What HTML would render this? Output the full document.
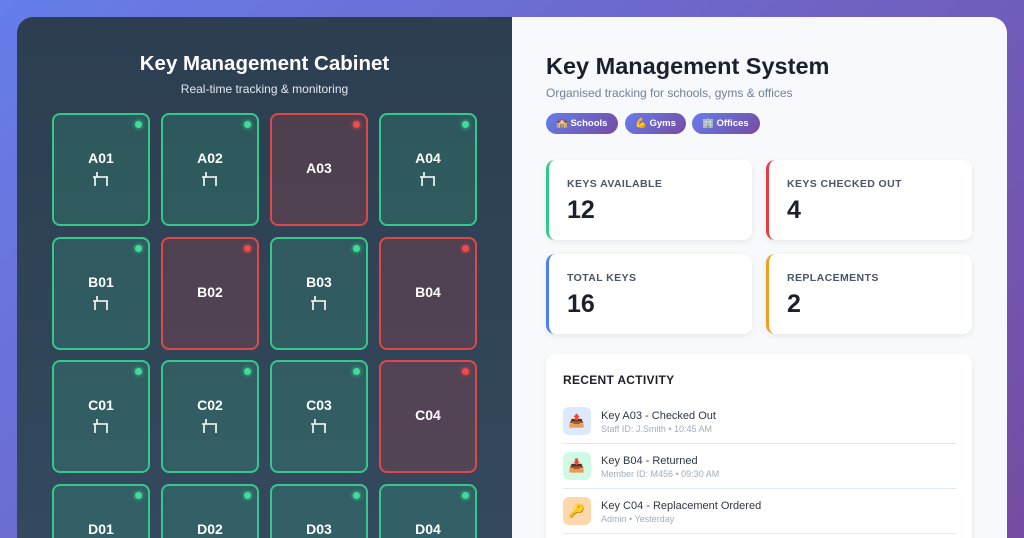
<!DOCTYPE html>
<html><head><meta charset="utf-8"><style>
*{box-sizing:border-box;margin:0;padding:0}
html{width:1024px;height:538px;overflow:hidden}
body{width:1024px;height:538px;overflow:hidden;background:linear-gradient(135deg,#667eea,#764ba2);font-family:"Liberation Sans","Noto Sans CJK SC",sans-serif;position:relative}
.wrap{position:absolute;left:17px;top:17px;width:990px;height:521px;border-radius:16px 16px 0 0;overflow:hidden;display:flex}
.left{width:495px;background:linear-gradient(180deg,#2c3e50,#34495e);position:relative}
.left h1{position:absolute;top:35px;width:100%;text-align:center;color:#fff;font-size:20.5px;font-weight:bold}
.left p{position:absolute;top:65px;width:100%;text-align:center;color:#e2e8f0;font-size:12px}
#g{position:absolute;left:0;top:0;width:1024px;height:538px;overflow:hidden}
.cell{position:absolute;width:98px;height:113px;border-radius:8px;border:2px solid #34c88a;background:rgba(52,200,138,.18);color:#fff;text-align:center}
.cell.r{border-color:#e04848;background:rgba(229,62,62,.18)}
.cell .d{position:absolute;right:6px;top:6px;width:7px;height:7px;border-radius:50%;background:#3ddc97;box-shadow:0 0 4px #3ddc97}
.cell.r .d{background:#f04a4a;box-shadow:0 0 4px #f04a4a}
.cell b{display:block;font-size:14px;margin-top:35px}
.cell.r b{margin-top:45px}
.cell svg{display:block;margin:5px auto 0}
.right{flex:1;background:#f7f9fc;position:relative}
.right h2{position:absolute;left:34px;top:36px;font-size:23.5px;color:#1a202c;font-weight:bold}
.sub{position:absolute;left:34px;top:69px;font-size:12px;color:#718096}
.tag{position:absolute;top:96px;height:21px;border-radius:11px;background:linear-gradient(135deg,#667eea,#764ba2);color:#fff;font-size:9.5px;font-weight:bold;line-height:21px;padding-left:10px}
.card{position:absolute;width:206px;height:80px;background:#fff;border-radius:9px;box-shadow:0 2px 6px rgba(0,0,0,.07);border-left:3px solid}
.card .l{position:absolute;left:18px;top:18px;font-size:10.5px;font-weight:bold;color:#4a5568;letter-spacing:.4px}
.card .v{position:absolute;left:18px;top:36px;font-size:25px;font-weight:bold;color:#1a202c}
.act{position:absolute;left:34px;top:337px;width:426px;height:220px;background:#fff;border-radius:9px;box-shadow:0 2px 6px rgba(0,0,0,.07)}
.act h3{position:absolute;left:17px;top:19px;font-size:12px;font-weight:bold;color:#1a202c;letter-spacing:.3px}
.it{position:absolute;left:17px;width:393px;height:37px;border-bottom:1px solid #e2e8f0}
.ic{position:absolute;left:0;top:0;width:28px;height:28px;border-radius:6px;font-size:13px;text-align:center;line-height:28px}
.t1{position:absolute;left:38px;top:3px;font-size:11px;color:#2d3748}
.t2{position:absolute;left:38px;top:17px;font-size:9px;color:#a0aec0}
</style></head><body>
<div class="wrap">
<div class="left">
<h1>Key Management Cabinet</h1>
<p>Real-time tracking &amp; monitoring</p>
</div>
<div class="right">
<h2>Key Management System</h2>
<div class="sub">Organised tracking for schools, gyms &amp; offices</div>
<div class="tag" style="left:34px;width:72px">🏫 Schools</div>
<div class="tag" style="left:113px;width:61px">💪 Gyms</div>
<div class="tag" style="left:180px;width:68px">🏢 Offices</div>
<div class="card" style="left:34px;top:143px;border-color:#34c88a"><div class="l">KEYS AVAILABLE</div><div class="v">12</div></div>
<div class="card" style="left:254px;top:143px;border-color:#e53e3e"><div class="l">KEYS CHECKED OUT</div><div class="v">4</div></div>
<div class="card" style="left:34px;top:237px;border-color:#4c7ff0"><div class="l">TOTAL KEYS</div><div class="v">16</div></div>
<div class="card" style="left:254px;top:237px;border-color:#f0a020"><div class="l">REPLACEMENTS</div><div class="v">2</div></div>
<div class="act"><h3>RECENT ACTIVITY</h3>
<div class="it" style="top:53px"><div class="ic" style="background:#dbeafe">📤</div><div class="t1">Key A03 - Checked Out</div><div class="t2">Staff ID: J.Smith • 10:45 AM</div></div>
<div class="it" style="top:98px"><div class="ic" style="background:#d1fae5">📥</div><div class="t1">Key B04 - Returned</div><div class="t2">Member ID: M456 • 09:30 AM</div></div>
<div class="it" style="top:143px"><div class="ic" style="background:#fed7aa">🔑</div><div class="t1">Key C04 - Replacement Ordered</div><div class="t2">Admin • Yesterday</div></div>
</div>
</div>
</div>
<div id="g"></div>
<script>
var xs=[52,161,270,379],ys=[113,237,360,484],rows="ABCD",red={"A03":1,"B02":1,"B04":1,"C04":1},h="";
var ico='<svg width="18" height="16" viewBox="0 0 18 16"><path d="M5 1v5M1 6h15M3 6v9M15 6v9" stroke="#fff" stroke-width="1.6" fill="none"/></svg>';
for(var r=0;r<4;r++)for(var c=0;c<4;c++){var n=rows[r]+"0"+(c+1),isr=red[n];
h+='<div class="cell'+(isr?' r':'')+'" style="left:'+xs[c]+'px;top:'+ys[r]+'px"><div class="d"></div><b>'+n+'</b>'+(isr?'':ico)+'</div>';}
document.getElementById("g").innerHTML=h;
</script>
</body></html>
